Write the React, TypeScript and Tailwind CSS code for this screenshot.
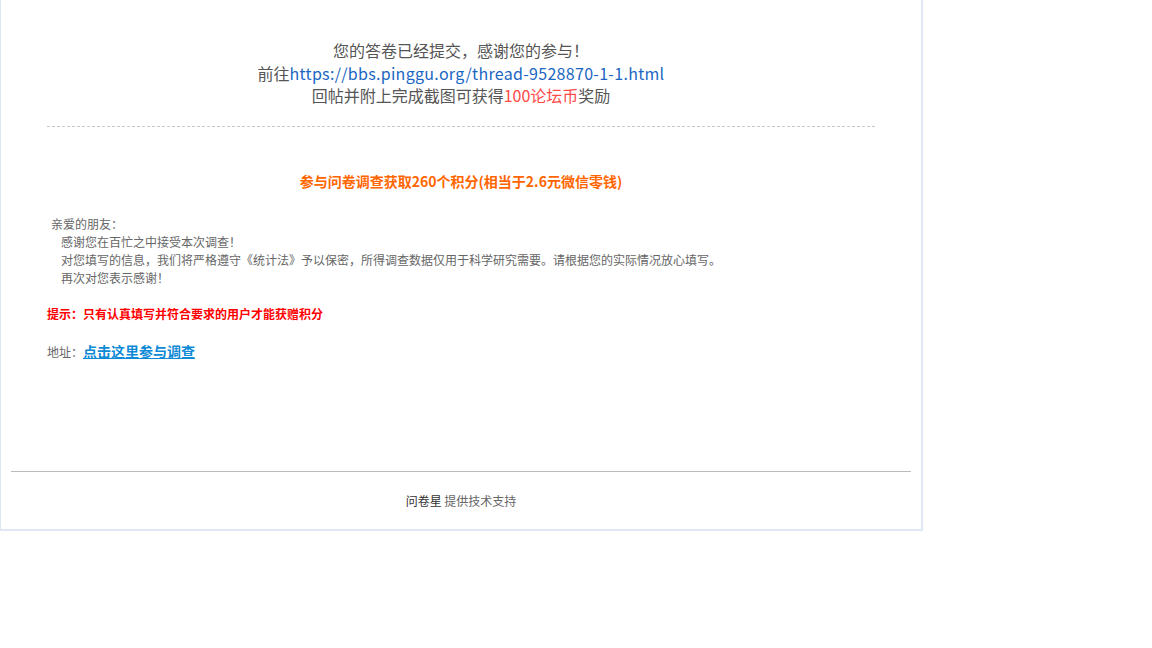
import React from 'react';

const font = { fontFamily: '"Noto Sans CJK SC", "Microsoft YaHei", sans-serif' };

export default function App() {
  return (
    <div className="w-full min-h-[648px] bg-white" style={font}>
      <div className="w-[923px] border-l border-r-2 border-b-2 border-[#dfe7f4] bg-white">
        <div className="px-[46px]">
          {/* 提交结果 */}
          <div className="pt-[39px] text-center text-[16px] leading-[22.5px] text-[#555]">
            <div>您的答卷已经提交，感谢您的参与！</div>
            <div>
              前往<a href="#" className="text-[#1a66c2] tracking-[0.3px]">https://bbs.pinggu.org/thread-9528870-1-1.html</a>
            </div>
            <div>
              回帖并附上完成截图可获得<span className="text-[#ff4a4a]">100论坛币</span>奖励
            </div>
          </div>
          <div className="mt-[19px] border-b border-dashed border-[#c8c8c8]"></div>

          {/* 问卷说明 */}
          <div className="mt-[44px] text-center text-[14px] leading-[20px] font-bold text-[#ff6600]">
            参与问卷调查获取260个积分(相当于2.6元微信零钱)
          </div>
          <div className="mt-[24px] text-[12px] leading-[18px] text-[#666]">
            <div className="pl-[4px]">亲爱的朋友：</div>
            <div className="pl-[14px]">感谢您在百忙之中接受本次调查！</div>
            <div className="pl-[14px]">
              对您填写的信息，我们将严格遵守《统计法》予以保密，所得调查数据仅用于科学研究需要。请根据您的实际情况放心填写。
            </div>
            <div className="pl-[14px]">再次对您表示感谢！</div>
          </div>
          <div className="mt-[18px] text-[12px] leading-[18px] font-bold text-[#ff0000]">
            提示：只有认真填写并符合要求的用户才能获赠积分
          </div>
          <div className="mt-[18px] text-[12px] leading-[20px] text-[#666]">
            地址：
            <a href="#" className="text-[14px] font-bold text-[#0e8ad6] underline">
              点击这里参与调查
            </a>
          </div>
        </div>

        {/* 页脚 */}
        <div className="mx-[10px] mt-[109px] border-t border-[#bbbbbb]"></div>
        <div className="pt-[20px] pb-[19px] text-center text-[12px] leading-[18px] text-[#666]">
          <span className="text-[#333]">问卷星</span> 提供技术支持
        </div>
      </div>
    </div>
  );
}
